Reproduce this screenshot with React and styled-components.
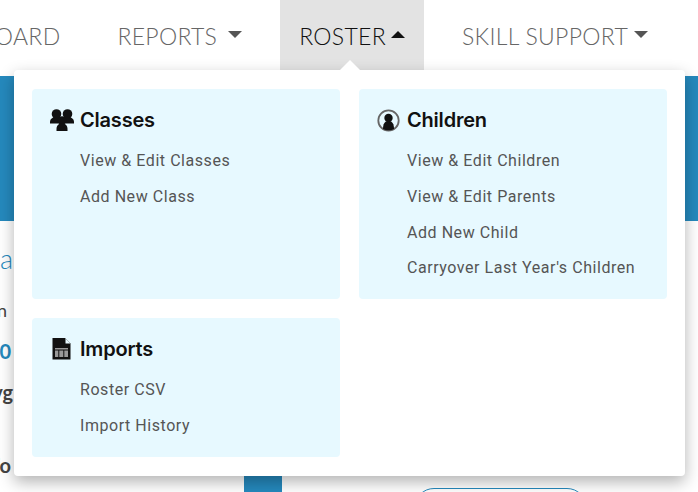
import React from "react";
import styled, { createGlobalStyle } from "styled-components";

const GlobalStyle = createGlobalStyle`
  html, body {
    margin: 0;
    padding: 0;
    height: 100%;
    overflow: hidden;
    background: #fff;
  }
  * { box-sizing: border-box; }
`;

const Page = styled.div`
  position: relative;
  width: 698px;
  height: 492px;
  overflow: hidden;
  font-family: "Lato", "Liberation Sans", sans-serif;
`;

const Nav = styled.nav`
  display: flex;
  justify-content: flex-end;
  gap: 19px;
  height: 70px;
  padding-right: 31px;
`;

const NavItem = styled.div`
  display: flex;
  align-items: center;
  gap: ${(p) => (p.$open ? 5 : 6)}px;
  height: 70px;
  padding: 2px 19px 0;
  flex-shrink: 0;
  font-family: "Lato", sans-serif;
  font-weight: 300;
  font-size: 23px;
  letter-spacing: 0.3px;
  white-space: nowrap;
  color: ${(p) => (p.$open ? "#111" : "#666")};
  background: ${(p) => (p.$open ? "#e3e3e3" : "transparent")};
`;

const Caret = styled.span`
  width: 0;
  height: 0;
  margin-top: -3px;
  margin-left: ${(p) => p.$gap || 0}px;
  border-left: 7px solid transparent;
  border-right: 7px solid transparent;
  border-top: ${(p) => (p.$up ? "0" : "7px solid #555")};
  border-bottom: ${(p) => (p.$up ? "7px solid #111" : "0")};
`;

const Hero = styled.div`
  height: 145px;
  margin-top: 6px;
  background: #2589bd;
`;

const Below = styled.div`
  display: flex;
  height: 271px;
`;

const ClippedColumn = styled.div`
  display: flex;
  flex-direction: column;
  align-items: flex-end;
  width: 14px;
  height: 100%;
  overflow: hidden;
  padding-top: 20px;
`;

const Clipped = styled.div`
  height: 36px;
  line-height: 36px;
  margin-top: ${(p) => p.$top || 0}px;
  margin-right: ${(p) => p.$end || 0}px;
  font-size: ${(p) => p.$size || 20}px;
  font-weight: ${(p) => p.$weight || 700};
  color: ${(p) => p.$color || "#444"};
  white-space: nowrap;
`;

const Tile = styled.div`
  width: 38px;
  height: 16px;
  margin: 255px 0 0 230px;
  background: #2589bd;
`;

const Pill = styled.div`
  width: 173px;
  height: 40px;
  margin: 267px 0 0 132px;
  border: 1.5px solid #2589bd;
  border-radius: 20px;
`;

const Dropdown = styled.div`
  position: absolute;
  left: 14px;
  top: 70px;
  width: 671px;
  height: 406px;
  padding: 19px 18px;
  display: grid;
  grid-template-columns: 308px 308px;
  grid-template-rows: 210px 139px;
  column-gap: 19px;
  row-gap: 19px;
  background: #fff;
  border-radius: 4px;
  box-shadow: 0 6px 16px rgba(0, 0, 0, 0.3);

  &::before {
    content: "";
    position: absolute;
    left: 326px;
    top: -10px;
    border-left: 10px solid transparent;
    border-right: 10px solid transparent;
    border-bottom: 10px solid #fff;
  }
`;

const Card = styled.section`
  padding: 18px 18px 0;
  background: #e7f9ff;
  border-radius: 4px;
`;

const CardHead = styled.h3`
  display: flex;
  align-items: center;
  gap: 6px;
  height: 26px;
  margin: 0 0 16px;
  font-family: "Inter", sans-serif;
  font-size: 20px;
  font-weight: 600;
  letter-spacing: -0.2px;
  color: #111;
`;

const IconBox = styled.span`
  display: flex;
  justify-content: center;
  width: 25px;
  margin-left: -1px;
`;

const LinkList = styled.ul`
  display: flex;
  flex-direction: column;
  gap: 11.800px;
  margin: 0;
  padding: 0 0 0 30px;
  list-style: none;
`;

const LinkItem = styled.li`
  height: 24px;
  line-height: 24px;
  font-family: "Roboto", sans-serif;
  font-size: 16px;
  letter-spacing: 0.55px;
  color: #555;
  white-space: nowrap;
`;

const ClassesIcon = () => (
  <svg width="24" height="22" viewBox="0 0 24 22" fill="#111">
    <circle cx="6.500" cy="5" r="4.800" />
    <circle cx="17.500" cy="5" r="4.800" />
    <path d="M0 13c0-3 2.500-5 6.500-5h11c4 0 6.500 2 6.500 5v1.500H0z" />
    <circle cx="12" cy="11.500" r="4.300" />
    <path d="M6.500 20c0-3.500 2-5.500 5.500-5.500s5.500 2 5.500 5.500v2h-11z" />
  </svg>
);

const ChildrenIcon = () => (
  <svg width="23" height="23" viewBox="0 0 23 23">
    <circle cx="11.500" cy="11.500" r="10.200" fill="none" stroke="#666" strokeWidth="1.800" />
    <circle cx="11.500" cy="9" r="4.200" fill="#111" />
    <path d="M6 20c0-5 1.500-8 5.500-8s5.500 3 5.500 8c-3 1.800-8 1.800-11 0z" fill="#111" />
  </svg>
);

const ImportsIcon = () => (
  <svg width="19" height="22" viewBox="0 0 19 22">
    <path d="M0.500 0h12.500l5.500 5.500v16h-18z" fill="#111" />
    <path d="M13.500 0.500l5 5h-5z" fill="#e7f9ff" />
    <path d="M3 10h13v9H3z" fill="#999" />
    <path d="M3 12h13M6.800 12v7M11.800 12v7" stroke="#111" strokeWidth="1" fill="none" />
  </svg>
);

const cards = [
  { title: "Classes", icon: <ClassesIcon />, links: ["View & Edit Classes", "Add New Class"] },
  {
    title: "Children",
    icon: <ChildrenIcon />,
    links: ["View & Edit Children", "View & Edit Parents", "Add New Child", "Carryover Last Year's Children"],
  },
  { title: "Imports", icon: <ImportsIcon />, links: ["Roster CSV", "Import History"] },
];

const App = () => {
  return (
    <Page>
      <GlobalStyle />
      <Nav>
        <NavItem>DASHBOARD</NavItem>
        <NavItem>
          REPORTS <Caret $gap={5} />
        </NavItem>
        <NavItem $open>
          ROSTER <Caret $up />
        </NavItem>
        <NavItem>
          SKILL SUPPORT <Caret />
        </NavItem>
      </Nav>
      <Hero />
      <Below>
        <ClippedColumn>
          <Clipped $size={27} $weight={300} $color="#2589bd" $end={1}>Data</Clipped>
          <Clipped $size={18} $weight={400} $end={7} $top={15}>Plan</Clipped>
          <Clipped $color="#2589bd" $end={3} $top={5}>100</Clipped>
          <Clipped $end={1} $top={5}>Avg</Clipped>
          <Clipped $end={3} $top={37}>Info</Clipped>
        </ClippedColumn>
        <Tile />
        <Pill />
      </Below>
      <Dropdown>
        {cards.map((card) => (
          <Card key={card.title}>
            <CardHead>
              <IconBox>{card.icon}</IconBox>
              {card.title}
            </CardHead>
            <LinkList>
              {card.links.map((link) => (
                <LinkItem key={link}>{link}</LinkItem>
              ))}
            </LinkList>
          </Card>
        ))}
      </Dropdown>
    </Page>
  );
};

export default App;
